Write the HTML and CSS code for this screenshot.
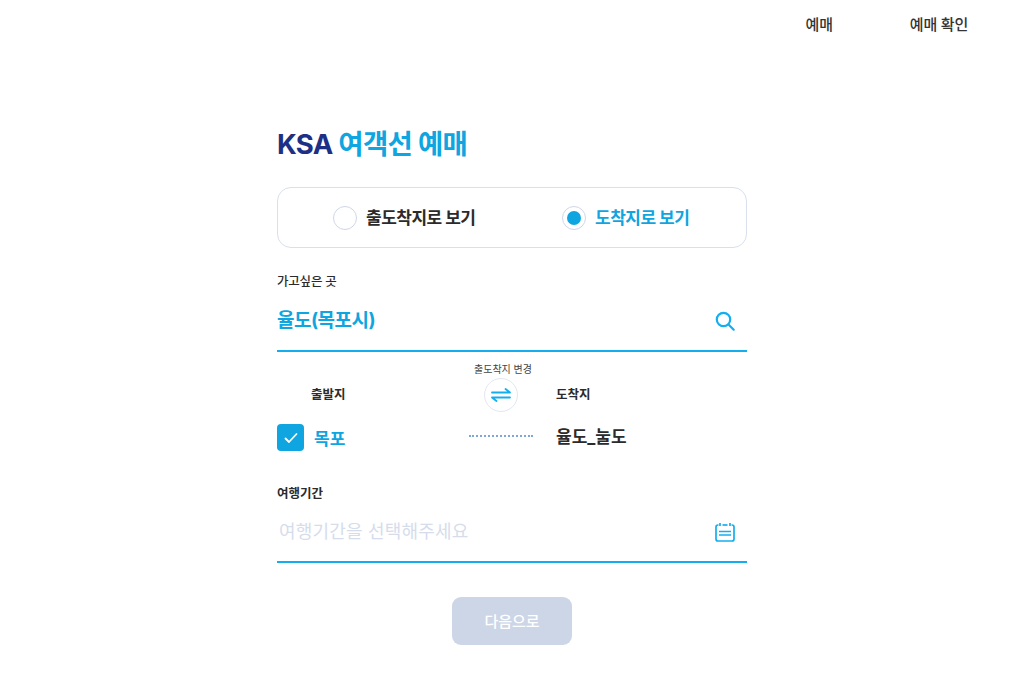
FILE: index.html
```html
<!DOCTYPE html>
<html lang="ko">
<head>
    <meta charset="utf-8">
    <title>KSA 여객선 예매</title>
    <link rel="stylesheet" href="styles.css">
</head>
<body>
    <!-- Top navigation -->
    <nav class="top-nav">
        <a class="nav-link">예매</a>
        <a class="nav-link">예매 확인</a>
    </nav>

    <main class="container">
        <h1 class="page-title"><span class="brand">KSA</span> 여객선 예매</h1>

        <div class="view-box">
            <label class="view-option">
                <span class="radio"></span>
                <span class="view-text">출도착지로 보기</span>
            </label>
            <label class="view-option active">
                <span class="radio"></span>
                <span class="view-text">도착지로 보기</span>
            </label>
        </div>

        <section class="field field-place">
            <div class="field-label">가고싶은 곳</div>
            <div class="field-row">
                <span class="field-value">율도(목포시)</span>
                <svg class="field-icon" viewBox="0 0 20 20" fill="none" stroke="#14aeee" stroke-width="2.2" stroke-linecap="round">
                    <circle cx="8.5" cy="8.5" r="6.7"/>
                    <path d="M13.5 13.5L18.7 18.7"/>
                </svg>
            </div>
        </section>

        <!-- Departure / arrival -->
        <section class="route">
            <div class="route-side route-from">
                <div class="route-label">출발지</div>
                <div class="route-port">
                    <span class="check">
                        <svg viewBox="0 0 14 12" width="14" height="12" fill="none" stroke="#fff" stroke-width="1.8" stroke-linecap="round" stroke-linejoin="round">
                            <path d="M1.5 6.5L5 10L12.5 2"/>
                        </svg>
                    </span>
                    <span class="port-name selected">목포</span>
                </div>
            </div>
            <div class="route-mid">
                <div class="swap-label">출도착지 변경</div>
                <button class="swap-btn" type="button">
                    <svg viewBox="0 0 20 14" width="20" height="14" fill="none" stroke="#14aeee" stroke-width="1.8" stroke-linecap="round" stroke-linejoin="round">
                        <path d="M1 4.5H19L14.5 1"/>
                        <path d="M19 9.5H1L5.5 13"/>
                    </svg>
                </button>
                <div class="route-dots"></div>
            </div>
            <div class="route-side route-to">
                <div class="route-label">도착지</div>
                <div class="route-port">
                    <span class="port-name">율도_눌도</span>
                </div>
            </div>
        </section>

        <section class="field field-date">
            <div class="field-label">여행기간</div>
            <div class="field-row">
                <span class="field-placeholder">여행기간을 선택해주세요</span>
                <svg class="field-icon" viewBox="0 0 20 20" fill="none" stroke="#14aeee" stroke-width="1.7">
                    <path d="M3.5 3H3Q1 3 1 5V17Q1 19 3 19H17Q19 19 19 17V5Q19 3 17 3H16.5"/>
                    <path d="M7.5 3H12.5"/>
                    <path d="M5 1V4M15 1V4"/>
                    <path d="M4 9.5H16M4 13H16"/>
                </svg>
            </div>
        </section>

        <div class="actions">
            <button class="next-btn" type="button">다음으로</button>
        </div>
    </main>
</body>
</html>
```

FILE: styles.css
```css
/* Basic reset and font settings */
* {
    margin: 0;
    padding: 0;
    box-sizing: border-box;
    font-family: Inter, Roboto, "Noto Sans CJK KR", sans-serif;
}

:root {
    --accent: #0ea5e0;
    --line: #14aeee;
    --text: #2b2b2b;
    --border: #d9dfec;
}

body {
    background: #ffffff;
    color: var(--text);
}

/* Top navigation */
.top-nav {
    display: flex;
    justify-content: flex-end;
    gap: 77px;
    height: 48px;
    padding: 15px 56px 0 0;
}

.nav-link {
    font-size: 15px;
    line-height: 20px;
    font-weight: 500;
    letter-spacing: -0.2px;
    color: #333;
}

/* Main column */
.container {
    width: 470px;
    margin: 0 auto;
}

.page-title {
    margin-top: 77px;
    font-size: 27.5px;
    line-height: 38px;
    font-weight: 700;
    letter-spacing: -0.7px;
    color: var(--accent);
}

.brand {
    color: #1e2f86;
}

/* Radio box */
.view-box {
    display: flex;
    height: 61px;
    margin-top: 24px;
    padding-left: 55px;
    border: 1px solid var(--border);
    border-radius: 14px;
}

.view-option {
    display: flex;
    flex: none;
    align-items: center;
    gap: 9px;
    width: 229px;
    font-size: 17px;
    font-weight: 700;
    letter-spacing: -0.5px;
}

.view-option.active {
    color: var(--accent);
}

.view-text {
    margin-top: -2px;
}

.radio {
    width: 24px;
    height: 24px;
    border: 1px solid #cfd6e6;
    border-radius: 50%;
    background: #fff;
}

.view-option.active .radio {
    background: var(--accent);
    background-clip: content-box;
    padding: 4px;
}

/* Input-like fields */
.field-label {
    font-size: 12.5px;
    line-height: 18px;
    font-weight: 500;
    letter-spacing: -0.2px;
}

.field-date .field-label {
    font-weight: 700;
    letter-spacing: 0;
}

.field-place {
    margin-top: 25px;
}

.field-date {
    margin-top: 27px;
}

.field-row {
    display: flex;
    justify-content: space-between;
    align-items: center;
    height: 61px;
    padding: 0 12px 0 0;
    border-bottom: 2px solid var(--line);
}

.field-date .field-row {
    height: 60px;
}

.field-value {
    font-size: 19px;
    font-weight: 700;
    letter-spacing: -0.5px;
    color: var(--accent);
    margin-top: -5px;
}

.field-placeholder {
    font-size: 18px;
    letter-spacing: 0.18px;
    color: #d5ddeb;
    margin: -4px 0 0 2px;
}

.field-icon {
    width: 20px;
    height: 20px;
}

/* Route */
.route {
    display: flex;
    height: 97px;
    margin-top: 9px;
}

.route-side {
    display: flex;
    flex-direction: column;
}

.route-from {
    width: 192px;
}

.route-mid {
    display: flex;
    flex-direction: column;
    align-items: flex-start;
    width: 87px;
}

.route-label {
    margin-top: 24px;
    font-size: 12.5px;
    line-height: 20px;
    font-weight: 700;
}

.route-from .route-label {
    padding-left: 34px;
}

.route-port {
    display: flex;
    align-items: center;
    gap: 10px;
    height: 27px;
    margin-top: 19px;
}

.check {
    display: flex;
    align-items: center;
    justify-content: center;
    width: 27px;
    height: 27px;
    border-radius: 4px;
    background: var(--accent);
}

.port-name {
    font-size: 17px;
    font-weight: 700;
    margin-top: -5px;
}

.port-name.selected {
    color: var(--accent);
    margin-top: -1px;
}

.swap-label {
    margin-left: 5px;
    font-size: 10px;
    line-height: 16px;
    color: #444;
    white-space: nowrap;
}

.swap-btn {
    display: flex;
    align-items: center;
    justify-content: center;
    width: 34px;
    height: 34px;
    margin: 1px 0 0 15px;
    border: 1px solid #e3e7f0;
    border-radius: 50%;
    background: #fff;
}

.route-dots {
    width: 64px;
    margin-top: 23px;
    border-top: 2px dotted #7ea6d6;
}

/* Next button */
.actions {
    display: flex;
    justify-content: center;
    margin-top: 34px;
}

.next-btn {
    width: 120px;
    height: 48px;
    padding-bottom: 2px;
    border: none;
    border-radius: 9px;
    background: #cdd6e7;
    color: #fff;
    font-size: 15px;
    font-weight: 500;
}
```
